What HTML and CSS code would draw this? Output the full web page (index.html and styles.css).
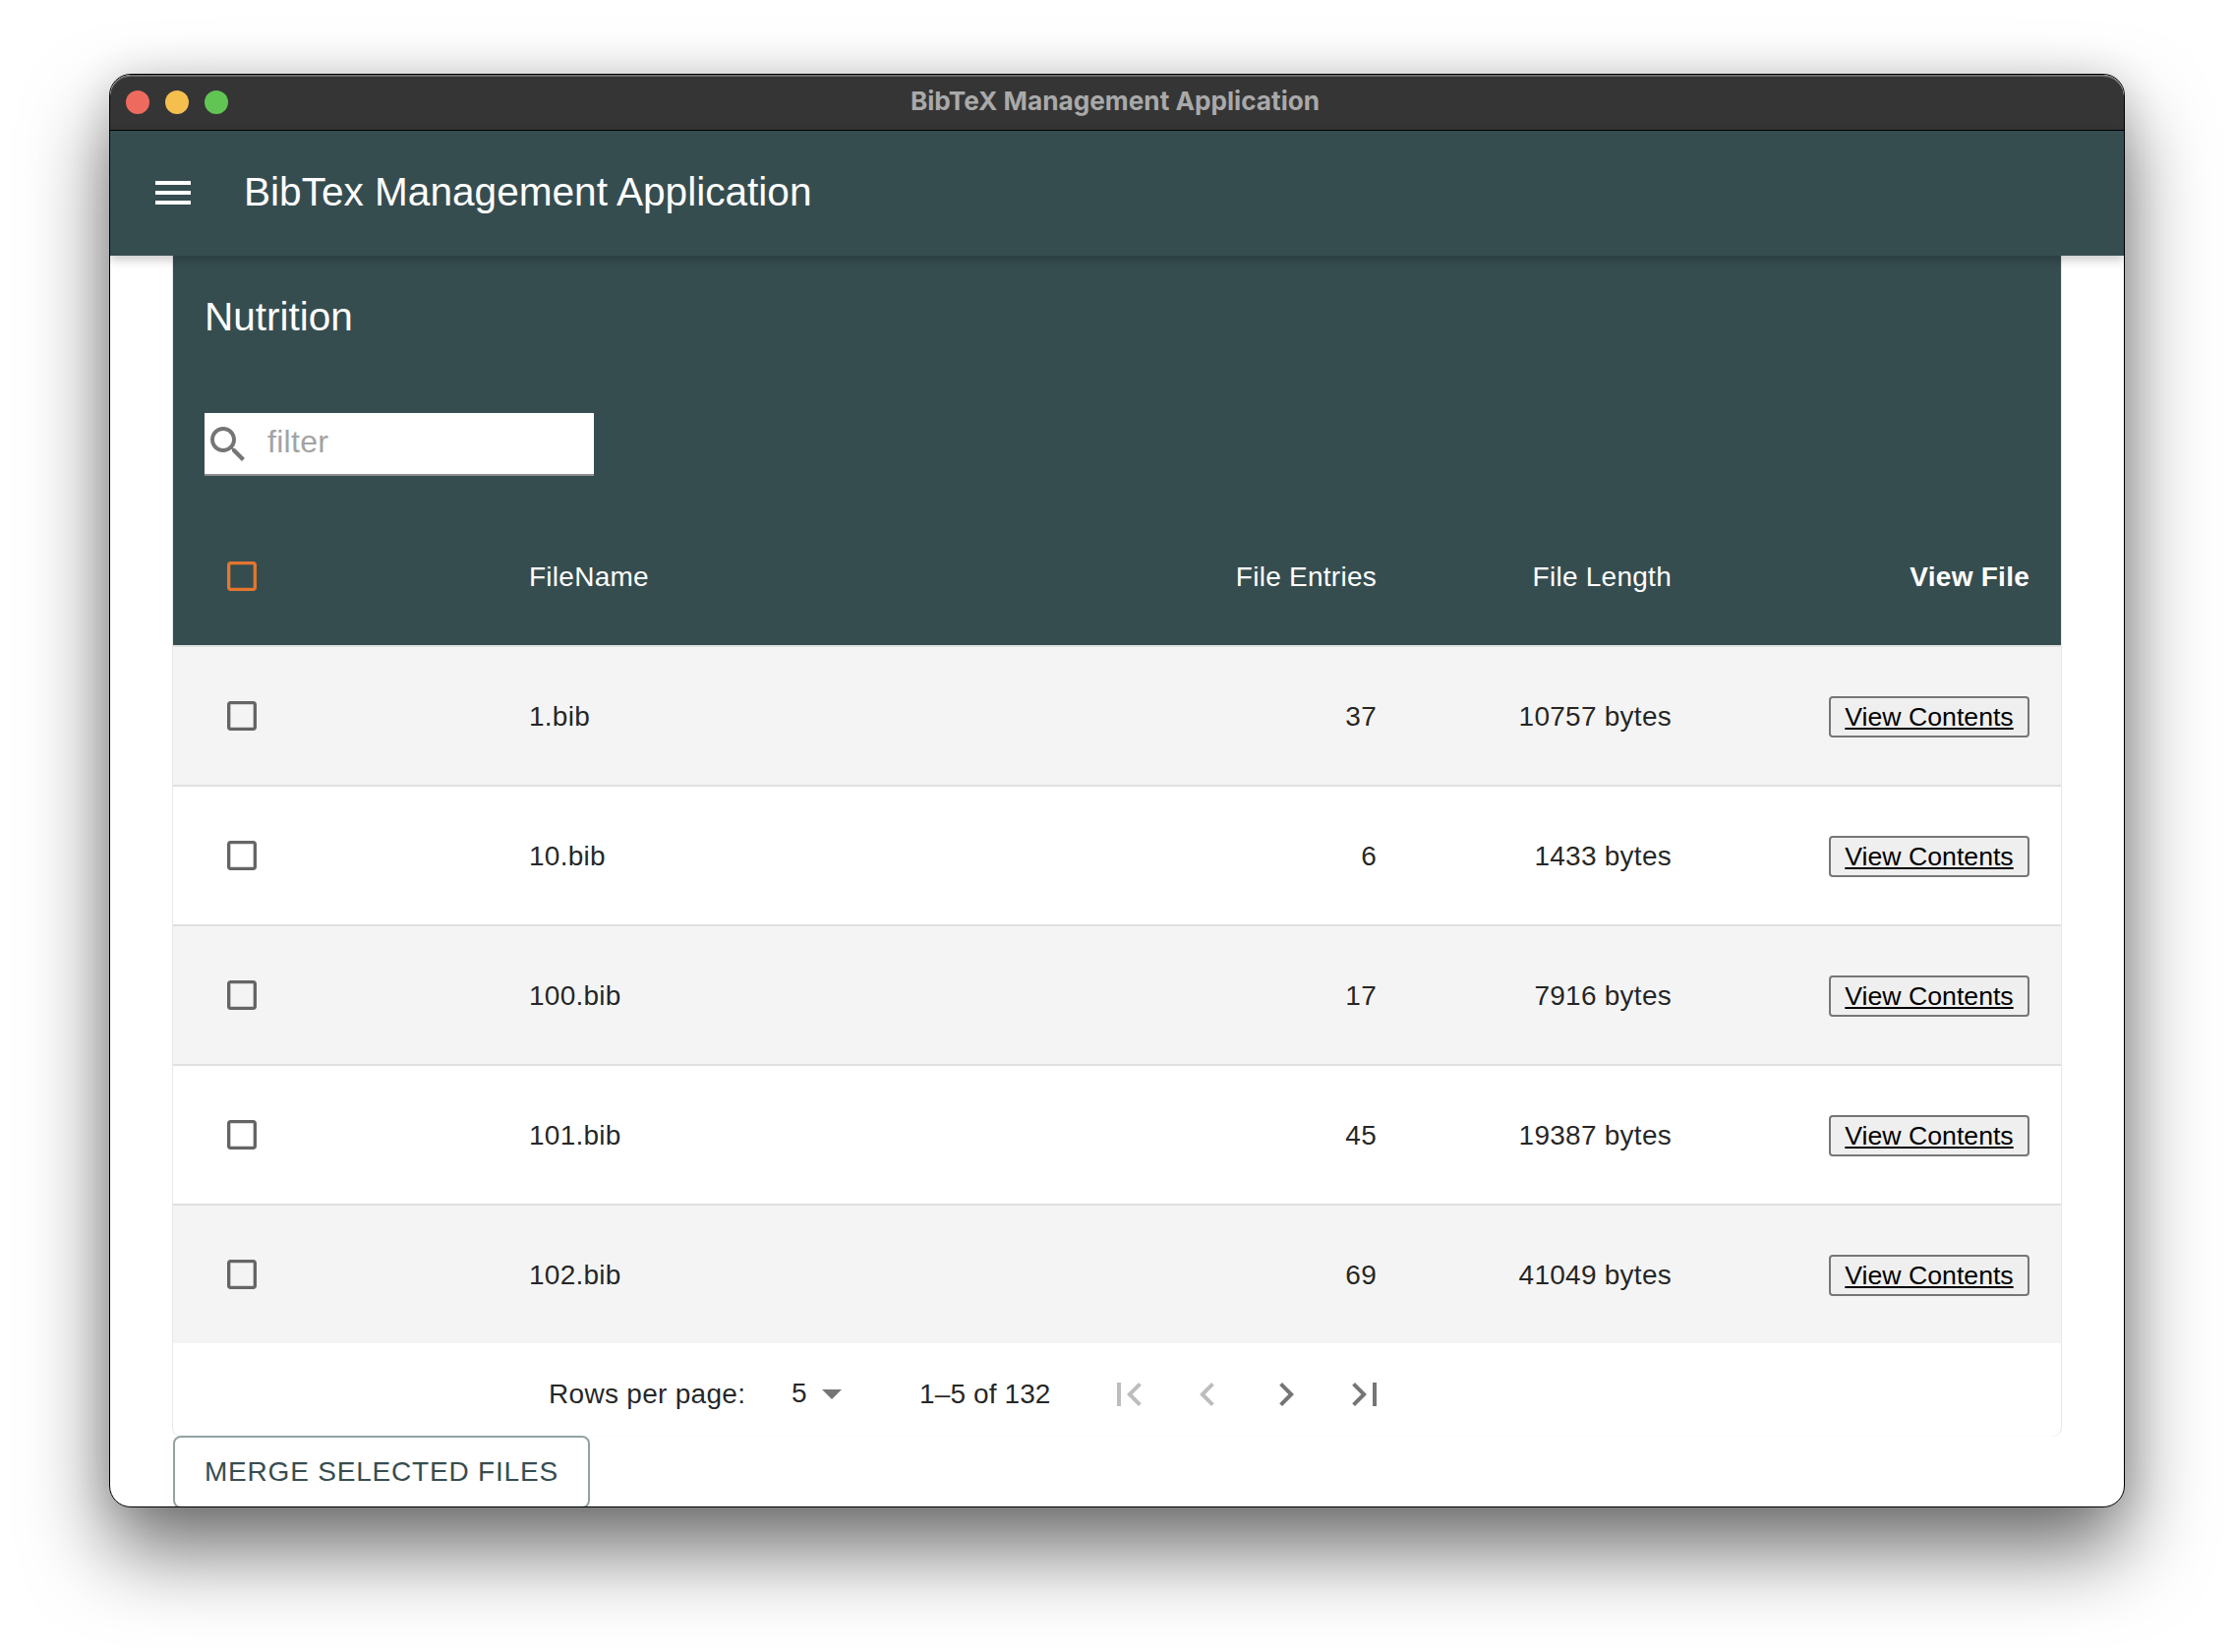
FILE: index.html
```html
<!DOCTYPE html>
<html lang="en">
<head>
<meta charset="utf-8">
<title>BibTeX Management Application</title>
<link rel="stylesheet" href="styles.css">
</head>
<body>
<div class="window">
  <div class="titlebar">
    <div class="lights">
      <span class="light red"></span>
      <span class="light yellow"></span>
      <span class="light green"></span>
    </div>
    <span class="window-title">BibTeX Management Application</span>
  </div>
  <header class="appbar">
    <svg class="menu-icon" viewBox="0 0 36 24"><path d="M0 0h36v4H0zM0 10h36v4H0zM0 20h36v4H0z"/></svg>
    <h1 class="app-title">BibTex Management Application</h1>
  </header>
  <main class="content">
    <section class="card">
      <div class="card-head">
        <h2 class="card-title">Nutrition</h2>
        <label class="filter">
          <svg class="search-icon" viewBox="0 0 24 24"><path d="M15.5 14h-.79l-.28-.27C15.41 12.59 16 11.11 16 9.5 16 5.91 13.09 3 9.5 3S3 5.91 3 9.5 5.91 16 9.5 16c1.61 0 3.09-.59 4.23-1.57l.27.28v.79l5 4.99L20.49 19l-4.99-5zm-6 0C7.01 14 5 11.99 5 9.5S7.01 5 9.5 5 14 7.01 14 9.5 11.99 14 9.5 14z"/></svg>
          <input class="filter-input" type="text" placeholder="filter">
        </label>
        <div class="row head-row">
          <div class="cell-check"><svg class="check check-orange" viewBox="0 0 24 24"><path d="M19 5v14H5V5h14m0-2H5c-1.1 0-2 .9-2 2v14c0 1.1.9 2 2 2h14c1.1 0 2-.9 2-2V5c0-1.1-.9-2-2-2z"/></svg></div>
          <div>FileName</div>
          <div class="num">File Entries</div>
          <div class="num">File Length</div>
          <div class="num strong">View File</div>
        </div>
      </div>
      <div class="row body-row alt">
        <div class="cell-check"><svg class="check" viewBox="0 0 24 24"><path d="M19 5v14H5V5h14m0-2H5c-1.1 0-2 .9-2 2v14c0 1.1.9 2 2 2h14c1.1 0 2-.9 2-2V5c0-1.1-.9-2-2-2z"/></svg></div>
        <div>1.bib</div><div class="num">37</div><div class="num">10757 bytes</div>
        <div class="num"><button class="view-btn" type="button"><span class="view-link">View Contents</span></button></div>
      </div>
      <div class="row body-row">
        <div class="cell-check"><svg class="check" viewBox="0 0 24 24"><path d="M19 5v14H5V5h14m0-2H5c-1.1 0-2 .9-2 2v14c0 1.1.9 2 2 2h14c1.1 0 2-.9 2-2V5c0-1.1-.9-2-2-2z"/></svg></div>
        <div>10.bib</div><div class="num">6</div><div class="num">1433 bytes</div>
        <div class="num"><button class="view-btn" type="button"><span class="view-link">View Contents</span></button></div>
      </div>
      <div class="row body-row alt">
        <div class="cell-check"><svg class="check" viewBox="0 0 24 24"><path d="M19 5v14H5V5h14m0-2H5c-1.1 0-2 .9-2 2v14c0 1.1.9 2 2 2h14c1.1 0 2-.9 2-2V5c0-1.1-.9-2-2-2z"/></svg></div>
        <div>100.bib</div><div class="num">17</div><div class="num">7916 bytes</div>
        <div class="num"><button class="view-btn" type="button"><span class="view-link">View Contents</span></button></div>
      </div>
      <div class="row body-row">
        <div class="cell-check"><svg class="check" viewBox="0 0 24 24"><path d="M19 5v14H5V5h14m0-2H5c-1.1 0-2 .9-2 2v14c0 1.1.9 2 2 2h14c1.1 0 2-.9 2-2V5c0-1.1-.9-2-2-2z"/></svg></div>
        <div>101.bib</div><div class="num">45</div><div class="num">19387 bytes</div>
        <div class="num"><button class="view-btn" type="button"><span class="view-link">View Contents</span></button></div>
      </div>
      <div class="row body-row alt">
        <div class="cell-check"><svg class="check" viewBox="0 0 24 24"><path d="M19 5v14H5V5h14m0-2H5c-1.1 0-2 .9-2 2v14c0 1.1.9 2 2 2h14c1.1 0 2-.9 2-2V5c0-1.1-.9-2-2-2z"/></svg></div>
        <div>102.bib</div><div class="num">69</div><div class="num">41049 bytes</div>
        <div class="num"><button class="view-btn" type="button"><span class="view-link">View Contents</span></button></div>
      </div>
      <footer class="pager">
        <span class="pager-label">Rows per page:</span>
        <span class="pager-select">5<svg class="pager-arrow" viewBox="0 0 24 24"><path d="M7 10l5 5 5-5z"/></svg></span>
        <span class="pager-range">1–5 of 132</span>
        <div class="pager-icons">
          <svg class="pager-icon off" viewBox="0 0 24 24"><path d="M18.41 16.59L13.82 12l4.59-4.59L17 6l-6 6 6 6zM6 6h2v12H6z"/></svg>
          <svg class="pager-icon off" viewBox="0 0 24 24"><path d="M15.41 7.41L14 6l-6 6 6 6 1.41-1.41L10.83 12z"/></svg>
          <svg class="pager-icon" viewBox="0 0 24 24"><path d="M10 6L8.59 7.41 13.17 12l-4.58 4.59L10 18l6-6z"/></svg>
          <svg class="pager-icon" viewBox="0 0 24 24"><path d="M5.59 7.41L10.18 12l-4.59 4.59L7 18l6-6-6-6zM16 6h2v12h-2z"/></svg>
        </div>
      </footer>
    </section>
    <button class="merge-btn" type="button">MERGE SELECTED FILES</button>
  </main>
</div>
</body>
</html>
```

FILE: styles.css
```css
* { box-sizing: border-box; }

html, body {
  margin: 0;
  background: #fff;
}

body {
  width: 2272px;
  height: 1680px;
  padding: 75px 111px 0;
  overflow: hidden;
  font-family: "Liberation Sans", Arial, sans-serif;
  font-size: 28px;
  letter-spacing: 0.26px;
  color: rgba(0, 0, 0, 0.87);
}

.window {
  width: 2050px;
  height: 1458px;
  border: 1px solid #000;
  border-radius: 22px;
  overflow: hidden;
  background: #fff;
  box-shadow: 0 44px 84px rgba(0, 0, 0, 0.56), 0 0 40px rgba(0, 0, 0, 0.12);
  display: flex;
  flex-direction: column;
}

.titlebar {
  flex: none;
  height: 57px;
  background: #353535;
  border-bottom: 1px solid #000;
  box-shadow: inset 0 2px 0 #6a6a6a;
  border-radius: 21px 21px 0 0;
  display: flex;
  align-items: center;
  justify-content: center;
  position: relative;
}

.lights {
  position: absolute;
  left: 16px;
  top: 16px;
  display: flex;
  gap: 16px;
}

.light {
  width: 24px;
  height: 24px;
  border-radius: 50%;
}
.red { background: #ee6a5f; }
.yellow { background: #f5bf4f; }
.green { background: #61c554; }

.window-title {
  font-family: Inter, "Liberation Sans", sans-serif;
  font-size: 26.2px;
  font-weight: 700;
  letter-spacing: 0;
  color: #a9a9a9;
  margin: -3px 0 0 -4px;
}

.appbar {
  flex: none;
  height: 127px;
  background: #364d50;
  box-shadow: 0 4px 10px rgba(0, 0, 0, 0.22);
  display: flex;
  align-items: center;
  padding-left: 46px;
  gap: 54px;
  position: relative;
  z-index: 2;
}

.menu-icon {
  width: 36px;
  height: 24px;
  fill: #fff;
  flex: none;
  margin-top: -1px;
}

.app-title {
  margin: -2px 0 0;
  font-size: 40.6px;
  font-weight: 400;
  letter-spacing: 0;
  color: #fff;
}

.content {
  flex: 1;
  padding: 0 64px;
}

.card {
  height: 1200px;
  border-radius: 0 0 8px 8px;
  background: #fff;
  box-shadow: -1px 0 1px rgba(0, 0, 0, 0.1), 1px 0 1px rgba(0, 0, 0, 0.1);
}

.card-head {
  background: #364d50;
  color: #fff;
  height: 396px;
  display: flex;
  flex-direction: column;
  align-items: flex-start;
}

.card-title {
  margin: 37px 0 0 32px;
  font-size: 40.5px;
  font-weight: 400;
  letter-spacing: 0;
  line-height: 50px;
  height: 123px;
}

.filter {
  margin-left: 32px;
  width: 396px;
  height: 64px;
  background: #fff;
  border-bottom: 2px solid #8e8e8e;
  display: flex;
  align-items: center;
}

.search-icon {
  width: 48px;
  height: 48px;
  fill: #757575;
  flex: none;
  margin-top: 2px;
}

.filter-input {
  border: 0;
  outline: 0;
  background: transparent;
  width: 330px;
  margin: -3px 0 0 16px;
  padding: 0;
  font-family: inherit;
  font-size: 32px;
  letter-spacing: 0.3px;
  color: #333;
}
.filter-input::placeholder { color: #a3a3a3; opacity: 1; }

.row {
  width: 100%;
  display: grid;
  grid-template-columns: 362px 500px 362px 300px 364px;
  padding-right: 32px;
  align-items: center;
}

.row > :not(.cell-check) { padding-top: 2px; }

.head-row {
  margin-top: 32px;
  height: 140px;
}

.body-row {
  height: 142px;
  border-top: 2px solid #e0e0e0;
  background: #fff;
}
.alt { background: #f4f4f4; }

.cell-check {
  padding-left: 50px;
  display: flex;
}

.check {
  width: 40px;
  height: 40px;
  fill: #656565;
}
.check-orange { fill: #e2762f; }

.num { text-align: right; }
.strong { font-weight: 700; }

.view-btn {
  display: inline-block;
  vertical-align: top;
  width: 204px;
  height: 42px;
  padding: 0;
  border: 2px solid #767676;
  border-radius: 4px;
  background: #efefef;
  font-family: inherit;
  font-size: 26.67px;
  letter-spacing: 0;
  line-height: 36px;
  color: #000;
}
.view-link { text-decoration: underline; }

.pager {
  height: 94px;
  display: flex;
  align-items: center;
  padding: 10px 0 0 382px;
}

.pager-label { width: 247px; flex: none; letter-spacing: 0.3px; }

.pager-select {
  display: flex;
  align-items: center;
  width: 130px;
  flex: none;
  margin-top: -2px;
}

.pager-arrow {
  width: 48px;
  height: 48px;
  fill: #757575;
  margin-left: 1px;
}

.pager-range { width: 189px; flex: none; letter-spacing: 0.12px; }

.pager-icons {
  display: flex;
  gap: 32px;
}

.pager-icon {
  width: 48px;
  height: 48px;
  fill: #757575;
}
.pager-icon.off { fill: #bdbdbd; }

.merge-btn {
  display: block;
  width: 424px;
  height: 74px;
  padding: 0 30px;
  border: 2px solid #92a2a3;
  border-radius: 8px;
  background: #fff;
  color: #364d50;
  font-family: inherit;
  font-size: 28px;
  letter-spacing: 0.8px;
  text-transform: uppercase;
  text-align: left;
}
```
